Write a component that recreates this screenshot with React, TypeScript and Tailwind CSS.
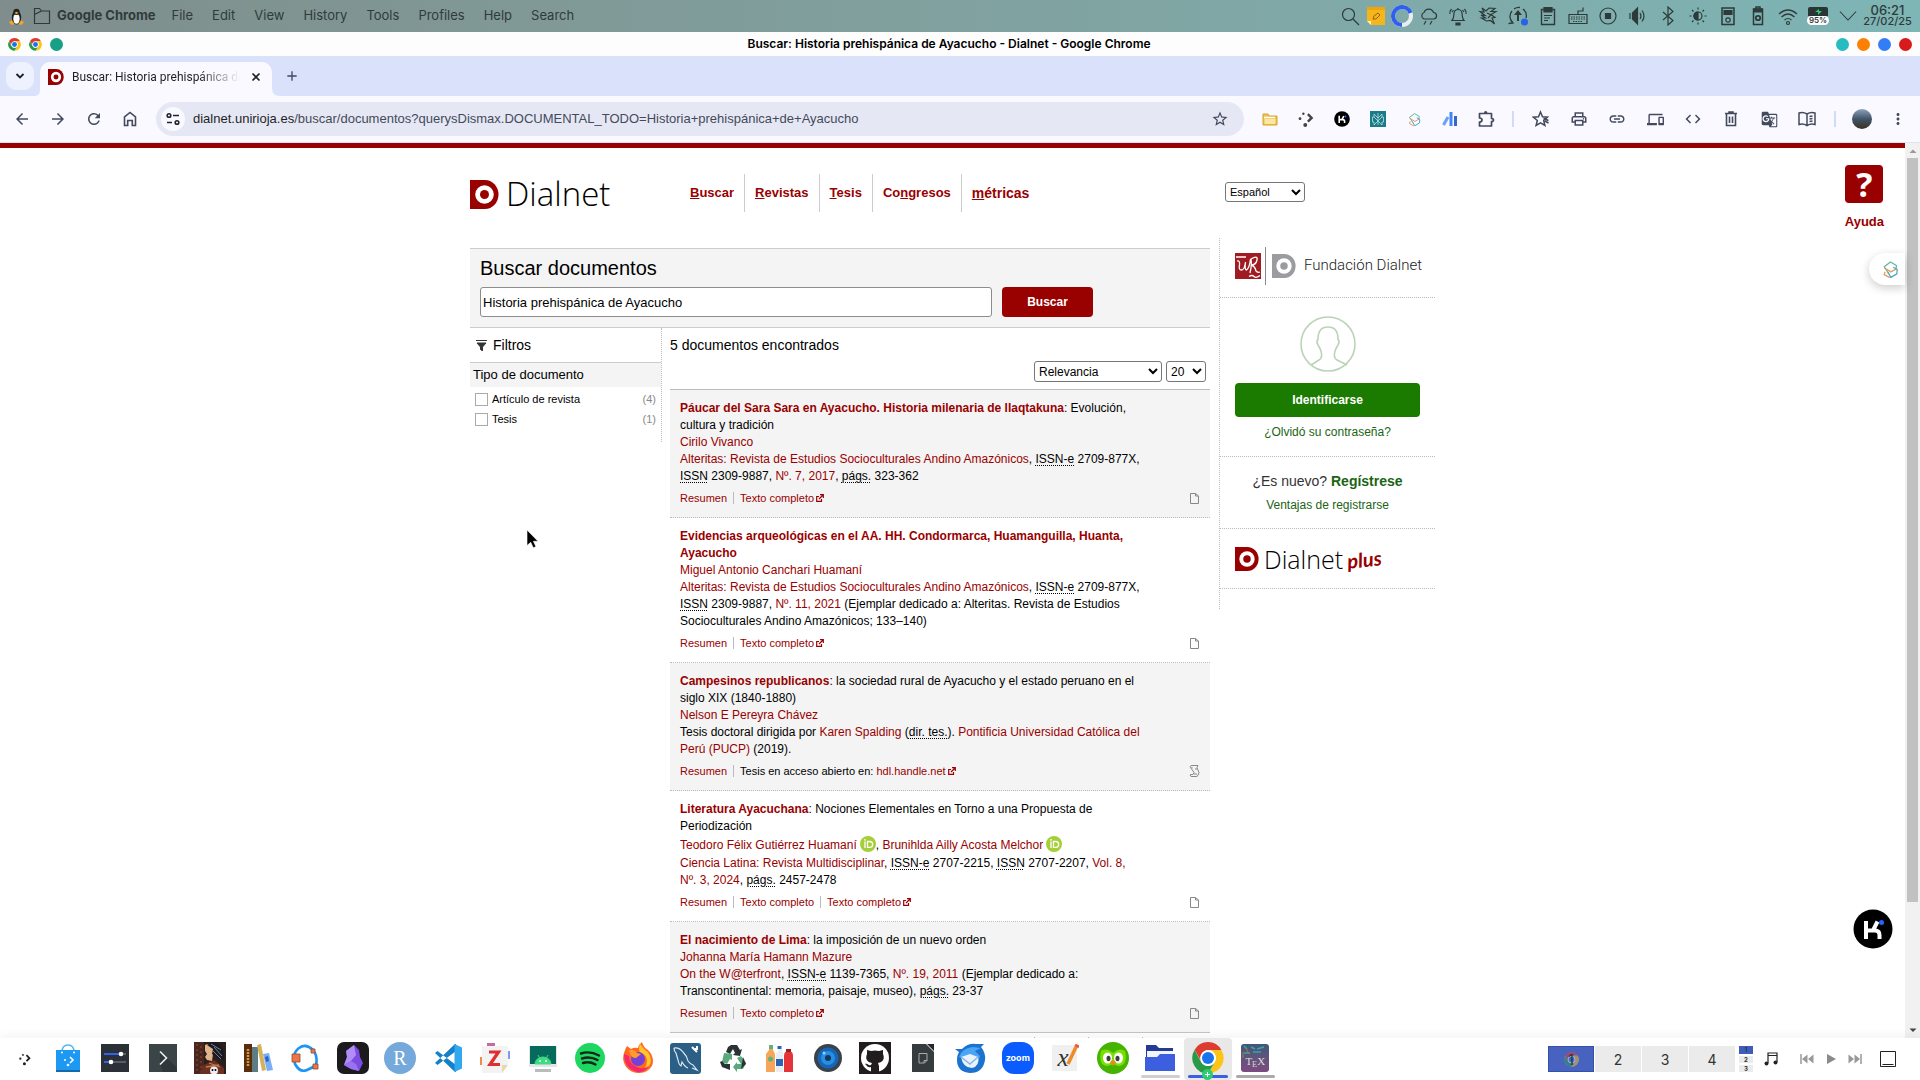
import React from "react";
import type { ReactNode } from "react";
import {
  MdArrowBack, MdArrowForward, MdRefresh, MdStarBorder, MdOutlinePrint, MdLink,
  MdOutlineDevices, MdCode, MdGTranslate, MdMoreVert, MdAdd,
} from "react-icons/md";

const P = ({ s = 24, vb = 24, children, className = "" }: { s?: number; vb?: number; children: ReactNode; className?: string }) => (
  <svg width={s} height={s} viewBox={`0 0 ${vb} ${vb}`} fill="none" className={`shrink-0 ${className}`} aria-hidden="true">
    {children}
  </svg>
);

const DMark = ({ s, color = "#990000" }: { s: number; color?: string }) => (
  <P s={s} vb={29}>
    <path d="M0 0h15a13.500 14.500 0 0 1 0 29H0z" fill={color} />
    <circle cx="14.500" cy="14.500" r="9.300" fill="#fff" />
    <circle cx="14.500" cy="14.500" r="4.500" fill={color} />
  </P>
);

const Chrome = ({ s }: { s: number }) => (
  <P s={s} vb={48}>
    <circle cx="24" cy="24" r="23" fill="#fff" />
    <path d="M24 12h20a23 23 0 0 0-40-.500L14 29.500A12 12 0 0 1 24 12z" fill="#dd3b2f" />
    <path d="M34.400 30L24.500 47A23 23 0 0 0 44 12H24a12 12 0 0 1 10.400 18z" fill="#fcc419" />
    <path d="M13.600 30L4 11.800A23 23 0 0 0 24.300 47l10.100-17a12 12 0 0 1-20.800 0z" fill="#2a9a48" />
    <circle cx="24" cy="24" r="11.500" fill="#fff" />
    <circle cx="24" cy="24" r="9" fill="#1a73e8" />
  </P>
);

const Sider = ({ s }: { s: number }) => (
  <P s={s}>
    <g strokeWidth="1.600" strokeLinejoin="round" strokeLinecap="round">
      <path d="M9 16L4 8.500 12 2.500l7.500 4.500-.5 4" stroke="#5cb8a5" />
      <path d="M19 11.500l-6.500 3.500L4.500 10M5 15.500l-1 3 6.500 3.500" stroke="#e59a63" />
      <path d="M9 16l3.500 6 7.500-4.500.500-5.500-4.500-2.500" stroke="#4aa8c4" />
    </g>
  </P>
);

const KMark = ({ s }: { s: number }) => (
  <P s={s} vb={40}>
    <circle cx="20" cy="20" r="19.500" fill="#000" />
    <path d="M13 12v18M13 21.500h9.500M24.500 12.500l-4.500 9M22 21.500q4.500 0 4.500 4.500v4" stroke="#fff" strokeWidth="4" />
    <circle cx="28.500" cy="13.500" r="2.500" fill="#2563ff" />
  </P>
);

const KdeDots = ({ s, color = "#222" }: { s: number; color?: string }) => (
  <P s={s}>
    <circle cx="8.500" cy="5" r="1.600" fill={color} />
    <circle cx="4" cy="11.500" r="1.900" fill={color} />
    <circle cx="11" cy="20" r="2.600" fill={color} />
    <path d="M14.500 5.500l5 5-5 5" stroke={color} strokeWidth="3.200" />
  </P>
);

/* ---------- desktop menu bar ---------- */

const ink = "#2d3a3a";
const Line = ({ children, s = 20 }: { children: ReactNode; s?: number }) => (
  <P s={s} vb={20}>
    <g stroke={ink} strokeWidth="1.200">{children}</g>
  </P>
);

const tray: [string, ReactNode][] = [
  ["Notificaciones", <Line key="b"><path d="M4 14.500h12c-2-2-1.500-4-2-7a4 4 0 0 0-8 0c-.5 3 0 5-2 7zM10 3.500V2M3.500 3q-2 2-1.500 5M16.500 3q2 2 1.500 5M5.500 4l-1.500 2M14.500 4l1.500 2" /><path d="M8 17h4v2H8z" fill={ink} /></Line>],
  ["Pájaro", <Line key="c"><path d="M4 2l4 3 3-3 6 .5-4 3h5l-5 3 4 3-3 .5 2.500 6-4-3.500-4 .5-5-3h4L3 9l4 .5L2 5.500l4 .5zM9 7l4 2-3 3" /></Line>],
  ["Actualizaciones", <P key="d" s={22} vb={22}><path d="M6 18a8.500 8.500 0 0 1-1-12M16 4a8.500 8.500 0 0 1 3 9M3 13.500L6 18l-4.500.500M7 4a8.500 8.500 0 0 1 6-1.500" stroke={ink} strokeWidth="1.300" /><path d="M10 16V10H7l4-5 4 5h-3v6z" fill={ink} /><circle cx="17.500" cy="17" r="3.500" fill="#2563eb" /></P>],
  ["Portapapeles", <Line key="e"><path d="M3.500 3.500h13v15h-13z" strokeWidth="1.400" /><path d="M6 1.500h8V6H6z" fill={ink} /><path d="M6 9.500h8M6 12h6M6 14.500h4" /></Line>],
  ["Teclado", <Line key="f"><path d="M1 8.500h18v9H1zM10 8V5h5V1.500" /><path d="M3 11h14M3 13h14M5 15.500h10" strokeDasharray="1.500 1" /></Line>],
  ["Grabar", <Line key="g"><circle cx="10" cy="10" r="8" /><path d="M7.500 7.500h5v5h-5z" fill={ink} /></Line>],
  ["Volumen", <Line key="h"><path d="M2 7v6M4.500 7v6l5 5V2l-5 5z" fill={ink} /><path d="M12 7q2 3 0 6M14 4.500q4 5.500 0 11" /></Line>],
  ["Bluetooth", <Line key="i"><path d="M5 6l10 8.500-5 4.500V1l5 4.500L5 14" /></Line>],
  ["Brillo", <Line key="j"><circle cx="10" cy="10" r="4" /><path d="M10 6a4 4 0 0 0 0 8z" fill={ink} /><path d="M10 1.500v2M10 16.500v2M1.500 10h2M16.500 10h2M4 4l1.500 1.500M14.500 14.500L16 16M4 16l1.500-1.500M14.500 5.500L16 4" /></Line>],
  ["Discos", <Line key="k"><path d="M4 2h12v16.500H4z" strokeWidth="1.500" /><path d="M6 4.500h8v4H6z" fill={ink} /><circle cx="10" cy="14" r="2.200" /></Line>],
  ["Energía", <Line key="l"><path d="M5.500 3h9v15.500h-9zM8 1h4v2H8z" strokeWidth="1.500" /><path d="M6 3h8v3H6z" fill={ink} /><circle cx="10" cy="12" r="2.200" strokeWidth="1.800" /></Line>],
  ["Wifi", <Line key="m"><path d="M1 8q9-8 18 0M3.500 11q6.500-6 13 0M6.500 14q3.500-3 7 0" /><circle cx="10" cy="17" r="1.500" /></Line>],
];

function MenuBar() {
  return (
    <header className="flex h-8 shrink-0 items-center bg-linear-to-r from-[#7f8e8c] via-[#80a19f] to-[#7eb5b5] pr-2 pl-2 font-[Inter] text-[#2f3b3b]">
      <P s={17} vb={18}>
        <ellipse cx="9" cy="10" rx="5" ry="7.500" fill="#222" />
        <ellipse cx="9" cy="11.500" rx="3.400" ry="5.300" fill="#fff" />
        <circle cx="9" cy="4" r="3.300" fill="#222" />
        <path d="M7 5l2-1 2 1-2 1.500z" fill="#f5a623" />
        <path d="M1 15l3-2 3 4-3 1zM17 15l-3-2-3 4 3 1z" fill="#f5a623" />
      </P>
      <P s={18} vb={18} className="ml-2">
        <path d="M1.500 1.500h5l2 2.500h8v12.500h-15zM1.500 7.500l3-1.500 4-2" stroke={ink} strokeWidth="1.200" />
      </P>
      <span className="ml-1.5 text-[13px] font-bold">Google Chrome</span>
      <nav className="ml-4 flex gap-[19px] text-[13px]">
        {["File", "Edit", "View", "History", "Tools", "Profiles", "Help", "Search"].map((m) => (
          <button key={m} type="button">{m}</button>
        ))}
      </nav>
      <div className="ml-auto flex items-center">
        <span className="flex w-[26px] justify-center"><Line><circle cx="8.500" cy="8.500" r="6" /><path d="M13 13l6 6" /></Line></span>
        <span className="flex w-[26px] justify-center">
          <P s={18} vb={18}><path d="M0 0h18v18H4l-4-4z" fill="#f7b51c" /><path d="M0 0h18v3H0z" fill="#f0a50c" /><path d="M0 14h4v4z" fill="#fff3c4" /><path d="M6 12l1-3 4-3 2 2-4 4z" stroke="#94640a" /></P>
        </span>
        <span className="flex w-[26px] justify-center">
          <P s={22} vb={22}><circle cx="11" cy="11" r="9" stroke="#e8eeee" strokeWidth="4" /><path d="M11 20A9 9 0 1 1 19.500 8" stroke="#2f5ff0" strokeWidth="4" /></P>
        </span>
        <span className="flex w-[28px] justify-center">
          <Line><path d="M5 13a3.500 3.500 0 0 1 0-6.500 5 5 0 0 1 9.500 0 3.300 3.300 0 0 1 .5 6.500zM7 15l-2 3.500M13 15l-2 3.500" /></Line>
        </span>
        {tray.map(([label, icon]) => (
          <button key={label} type="button" aria-label={label} className="flex w-[30px] justify-center">{icon}</button>
        ))}
        <span className="flex w-[30px] flex-col items-center">
          <span className="flex h-[9px] w-5 items-center justify-center rounded-t-xs bg-[#2b3535]">
            <P s={9} vb={9}><path d="M1 5l4-3v2h3L4 8V5z" fill="#2ecc71" /></P>
          </span>
          <span className="rounded-full bg-white px-0.5 text-[8px] leading-[9px] font-semibold">95%</span>
        </span>
        <span className="flex w-[30px] justify-center"><Line s={18}><path d="M1 5l9 9.500L19 5" /></Line></span>
        <time className="flex w-[49px] flex-col items-center text-[11px] leading-[11px] font-medium">
          <span className="text-[13px]">06:21</span>
          <span>27/02/25</span>
        </time>
      </div>
    </header>
  );
}

/* ---------- browser chrome ---------- */

function Browser() {
  const ext = "flex w-9 justify-center";
  const tool = "flex w-[38px] justify-center";
  return (
    <>
      <div className="grid h-6 shrink-0 grid-cols-[1fr_auto_1fr] items-center bg-[#fdfdfd] px-2">
        <div className="flex items-center gap-2">
          <Chrome s={13} />
          <Chrome s={13} />
          <span className="size-[13px] rounded-full bg-[#17a085]" />
        </div>
        <h1 className="mr-[22px] font-[Inter] text-[12px] font-semibold text-black">Buscar: Historia prehispánica de Ayacucho - Dialnet - Google Chrome</h1>
        <div className="flex items-center justify-end gap-2">
          <button type="button" aria-label="Atenuar" className="size-[13px] rounded-full bg-[#26bcc0]" />
          <button type="button" aria-label="Minimizar" className="size-[13px] rounded-full bg-[#fb8004]" />
          <button type="button" aria-label="Maximizar" className="size-[13px] rounded-full bg-[#347ef5]" />
          <button type="button" aria-label="Cerrar" className="size-[13px] rounded-full bg-[#d91a1a]" />
        </div>
      </div>
      <div className="flex h-10 shrink-0 items-end bg-[#dae1fa] pl-1.5 font-[Roboto] text-[#1f2026]">
        <button type="button" aria-label="Buscar pestañas" className="mb-1.5 flex size-7 items-center justify-center rounded-[10px] bg-[#eef1fe]">
          <P s={10} vb={10}><path d="M1.500 3L5 6.500 8.500 3" stroke="#1f2026" strokeWidth="1.800" /></P>
        </button>
        <P s={6} vb={6}><path d="M6 0v6H0q6 0 6-6z" fill="#f9f9ff" /></P>
        <div className="flex h-[34px] w-[232px] items-center rounded-t-[10px] bg-[#f9f9ff] pr-[11px] pb-1 pl-2">
          <DMark s={16} />
          <span className="ml-2 w-[168px] overflow-hidden bg-linear-to-r from-[#1f2026] from-75% to-transparent bg-clip-text text-[12px] whitespace-nowrap text-transparent">Buscar: Historia prehispánica de Ayacucho</span>
          <button type="button" aria-label="Cerrar pestaña" className="ml-auto"><P s={10} vb={10}><path d="M1.500 1.500l7 7M8.500 1.500l-7 7" stroke="#1f2026" strokeWidth="1.700" /></P></button>
        </div>
        <P s={8} vb={8}><path d="M0 0v8h8q-8 0-8-8z" fill="#f9f9ff" /></P>
        <button type="button" aria-label="Pestaña nueva" className="mb-3 ml-1 text-[#444a5c]"><MdAdd size={16} /></button>
      </div>
      <div className="flex h-[47px] shrink-0 items-center border-b border-[#dfe3f5] bg-[#f9f9ff] pr-1 text-[#434a5e]">
        <button type="button" aria-label="Atrás" className="ml-1 flex w-9 justify-center"><MdArrowBack size={18} /></button>
        <button type="button" aria-label="Adelante" className="flex w-9 justify-center"><MdArrowForward size={18} /></button>
        <button type="button" aria-label="Recargar" className="flex w-9 justify-center"><MdRefresh size={18} /></button>
        <button type="button" aria-label="Inicio" className="flex w-9 justify-center">
          <P s={18} vb={18}><path d="M3.500 15.500V7L9 2.500 14.500 7v8.500h-3.200v-5H6.700v5z" stroke="#434a5e" strokeWidth="1.600" /></P>
        </button>
        <div className="ml-2 flex h-[34px] flex-1 items-center rounded-full bg-[#e5e8f4] px-[5px]">
          <span className="flex size-6 items-center justify-center rounded-full bg-[#f9f9ff]">
            <P s={14} vb={14}><g stroke="#1f2430" strokeWidth="1.600"><circle cx="3" cy="3.500" r="1.800" /><path d="M7 3.500h6M1 10.500h5" /><circle cx="11" cy="10.500" r="1.800" /></g></P>
          </span>
          <span className="ml-2 flex-1 font-[Liberation_Sans] text-[13px] whitespace-nowrap text-[#444a5a]"><span className="text-[#1d1f27]">dialnet.unirioja.es</span>/buscar/documentos?querysDismax.DOCUMENTAL_TODO=Historia+prehispánica+de+Ayacucho</span>
          <button type="button" aria-label="Añadir a marcadores" className="mr-2.5"><MdStarBorder size={18} /></button>
        </div>
        <div className="ml-2 flex items-center">
          <span className={ext}><P s={16} vb={16}><path d="M1 3h5l1 2h8v9H1z" fill="#f0c24b" stroke="#d8a42c" /><path d="M2.500 8h11v5h-11z" fill="#fbe6a2" /><path d="M2 6.500h11" stroke="#fff" strokeWidth="1.500" /></P></span>
          <span className={ext}><KdeDots s={18} color="#444" /></span>
          <span className={ext}><KMark s={16} /></span>
          <span className={ext}><P s={16} vb={16}><path d="M0 0h16v16H0z" fill="#1b7b87" /><path d="M8 2v12M4 3l4 4 4-4v3h1.500v5H12v3l-4-4-4 4v-3H2.500V6H4zM4 6l4 4 4-4" stroke="#b6dfe2" strokeWidth=".8" /></P></span>
          <span className={ext}><Sider s={15} /></span>
          <span className={ext}><P s={16} vb={16}><path d="M1.500 14L6 6" stroke="#6da0f5" strokeWidth="3" /><path d="M9 1v14" stroke="#4285f4" strokeWidth="3" /><path d="M13.500 5v10" stroke="#3367c9" strokeWidth="3" /></P></span>
          <span className={ext}><P s={18} vb={18}><path d="M2.500 3.500h12v5q2 0 2 1.500t-2 1.500v4.500h-12v-4q2.500 0 2.500-2t-2.500-2z" stroke="#434a5e" strokeWidth="1.700" strokeLinejoin="round" /><path d="M7 3q0-2 1.700-2t1.700 2z" fill="#434a5e" /></P></span>
        </div>
        <span className="mx-2 h-4 w-0.5 bg-[#cfdcf8]" />
        <div className="flex items-center">
          <span className={tool}><P s={18} vb={18}><path d="M8.500 2l2 4.800 5 .4-3.800 3.300 1.200 5-4.400-2.700-4.400 2.700 1.200-5L1.500 7.200l5-.4zM13 11l3.500 2M11.500 8.500l5 2" stroke="#434a5e" strokeWidth="1.500" /></P></span>
          <span className={tool}><MdOutlinePrint size={18} /></span>
          <span className={tool}><MdLink size={18} /></span>
          <span className={tool}><MdOutlineDevices size={17} /></span>
          <span className={tool}><MdCode size={18} /></span>
          <span className={tool}><P s={18} vb={18}><path d="M3 3.500h12M7 3V2h4v1M4.500 4v11.500h9V4M7.500 6.500v6.500M10.500 6.500v6.500" stroke="#434a5e" strokeWidth="1.600" /></P></span>
          <span className={tool}><MdGTranslate size={17} /></span>
          <span className={tool}><P s={20} vb={20}><path d="M10 5q-4-2.500-8-1v11.500q4-1.500 8 1 4-2.500 8-1V4q-4-1.500-8 1zM10 5v11.500M12.500 7.500l3-.5M12.500 10l3-.5M12.500 12.500l3-.5" stroke="#434a5e" strokeWidth="1.500" /></P></span>
        </div>
        <span className="mx-2 h-4 w-0.5 bg-[#cfdcf8]" />
        <span className="flex size-9 items-center justify-center">
          <span className="size-5 rounded-full bg-linear-to-b from-[#8fa3b8] via-[#41546a] to-[#3b3020]" />
        </span>
        <button type="button" aria-label="Menú" className={ext}><MdMoreVert size={18} /></button>
      </div>
    </>
  );
}

/* ---------- Dialnet page ---------- */

const A = ({ children, b = false }: { children: ReactNode; b?: boolean }) => (
  <a href="#" className={b ? "font-bold text-[#990000]" : "text-[#990000]"}>{children}</a>
);
const Ab = ({ children }: { children: ReactNode }) => (
  <abbr className="underline decoration-dotted decoration-1 underline-offset-2">{children}</abbr>
);
const Ext = () => (
  <P s={8} vb={8} className="ml-0.5 inline-block"><path d="M3 2.500H.700v4.800h4.800V5M4 .700h3.300V4M7 1L3 5" stroke="#990000" strokeWidth="1.200" /></P>
);
const Orcid = () => (
  <P s={16} vb={16} className="mb-1 ml-[3px] inline-block align-middle">
    <circle cx="8" cy="8" r="8" fill="#a6ce39" />
    <path d="M5 5.500V12M7.500 5.500h2.200a2.800 2.800 0 0 1 0 5.900H7.500z" stroke="#fff" strokeWidth="1.300" />
    <circle cx="5" cy="3.800" r=".9" fill="#fff" />
  </P>
);

type Item = { body: ReactNode; links: ReactNode[]; thesis?: boolean };

const completo = <><A>Texto completo</A><Ext /></>;
const alteritas = <A>Alteritas: Revista de Estudios Socioculturales Andino Amazónicos</A>;

const items: Item[] = [
  {
    body: (
      <>
        <p><A b>Páucar del Sara Sara en Ayacucho. Historia milenaria de llaqtakuna</A>: Evolución, cultura y tradición</p>
        <p><A>Cirilo Vivanco</A></p>
        <p>{alteritas}, <Ab>ISSN-e</Ab> 2709-877X, <Ab>ISSN</Ab> 2309-9887, <A>Nº. 7, 2017</A>, <Ab>págs.</Ab> 323-362</p>
      </>
    ),
    links: [<A key="r">Resumen</A>, completo],
  },
  {
    body: (
      <>
        <p><A b>Evidencias arqueológicas en el AA. HH. Condormarca, Huamanguilla, Huanta, Ayacucho</A></p>
        <p><A>Miguel Antonio Canchari Huamaní</A></p>
        <p>{alteritas}, <Ab>ISSN-e</Ab> 2709-877X, <Ab>ISSN</Ab> 2309-9887, <A>Nº. 11, 2021</A> (Ejemplar dedicado a: Alteritas. Revista de Estudios Socioculturales Andino Amazónicos; 133–140)</p>
      </>
    ),
    links: [<A key="r">Resumen</A>, completo],
  },
  {
    body: (
      <>
        <p><A b>Campesinos republicanos</A>: la sociedad rural de Ayacucho y el estado peruano en el siglo XIX (1840-1880)</p>
        <p><A>Nelson E Pereyra Chávez</A></p>
        <p>Tesis doctoral dirigida por <A>Karen Spalding</A> (<Ab>dir. tes.</Ab>). <A>Pontificia Universidad Católica del Perú (PUCP)</A> (2019).</p>
      </>
    ),
    links: [<A key="r">Resumen</A>, <>Tesis en acceso abierto en: <A>hdl.handle.net</A><Ext /></>],
    thesis: true,
  },
  {
    body: (
      <>
        <p><A b>Literatura Ayacuchana</A>: Nociones Elementales en Torno a una Propuesta de Periodización</p>
        <p className="h-5 leading-5"><A>Teodoro Félix Gutiérrez Huamaní</A><Orcid />, <A>Brunihlda Ailly Acosta Melchor</A><Orcid /></p>
        <p><A>Ciencia Latina: Revista Multidisciplinar</A>, <Ab>ISSN-e</Ab> 2707-2215, <Ab>ISSN</Ab> 2707-2207, <A>Vol. 8, Nº. 3, 2024</A>, <Ab>págs.</Ab> 2457-2478</p>
      </>
    ),
    links: [<A key="r">Resumen</A>, <A key="t">Texto completo</A>, completo],
  },
  {
    body: (
      <>
        <p><A b>El nacimiento de Lima</A>: la imposición de un nuevo orden</p>
        <p><A>Johanna María Hamann Mazure</A></p>
        <p><A>On the W@terfront</A>, <Ab>ISSN-e</Ab> 1139-7365, <A>Nº. 19, 2011</A> (Ejemplar dedicado a: Transcontinental: memoria, paisaje, museo), <Ab>págs.</Ab> 23-37</p>
      </>
    ),
    links: [<A key="r">Resumen</A>, completo],
  },
];

function ResultItem({ item }: { item: Item }) {
  return (
    <li className="border-b border-dotted border-[#bbb] px-2.5 pt-2.5 pb-[11px] odd:bg-[#f4f4f4] last:border-solid last:border-[#c4c4c4]">
      <div className="w-[462px] text-[12px] leading-[17px]">{item.body}</div>
      <div className="mt-[5px] flex h-4 items-center text-[11px] leading-4">
        {item.links.map((l, i) => (
          <span key={i} className={i === 0 ? "" : "ml-1.5 flex h-3 items-center border-l border-[#bbb] pl-1.5 whitespace-pre"}>{l}</span>
        ))}
        <P s={12} vb={12} className="ml-auto">
          {item.thesis
            ? <path d="M3 3.500q-2-3 1-3h6q-2 2 0 4.500t0 5.500q-1 1-2 1H3q-2-2 0-2h2q2-2 0-3.500T4 2M7 4h2M6 9h3" stroke="#888" />
            : <path d="M2.500 1.500h5L10.500 4v7.500h-8zM7.500 1.500V4h3" stroke="#888" />}
        </P>
      </div>
    </li>
  );
}

function DialnetPage() {
  const dotted = "border-b border-dotted border-[#bbb]";
  return (
    <div className="relative flex min-h-0 flex-1 overflow-hidden bg-white font-[Liberation_Sans] text-black">
      <div className="flex-1 border-t-[5px] border-[#990000]">
        <div className="mx-auto w-[965px]">
          <div className="flex h-[90px] items-start pt-[26px]">
            <a href="#" aria-label="Dialnet" className="flex h-10 w-[210px] items-center gap-[7px]">
              <DMark s={29} />
              <span className="font-[Open_Sans] text-[33px] leading-10 font-light">Dialnet</span>
            </a>
            <nav className="flex h-[38px] items-center text-[13px] font-bold text-[#990000]">
              <a href="#" className="flex h-full items-center border-r border-[#ccc] px-2.5"><span><u>B</u>uscar</span></a>
              <a href="#" className="flex h-full items-center border-r border-[#ccc] px-2.5"><span><u>R</u>evistas</span></a>
              <a href="#" className="flex h-full items-center border-r border-[#ccc] px-2.5"><span><u>T</u>esis</span></a>
              <a href="#" className="flex h-full items-center border-r border-[#ccc] px-2.5"><span>Co<u>n</u>gresos</span></a>
              <a href="#" className="px-2.5 text-[14px]"><u>m</u>étricas</a>
            </nav>
            <select aria-label="Idioma" className="mt-2 mr-[130px] ml-auto h-5 w-20 rounded-[3px] border border-[#767676] bg-white text-[11px]"><option>Español</option></select>
          </div>

          <div className="flex items-start justify-between">
            <div className="mt-2.5 w-[740px]">
              <form className="border-y border-[#ccc] bg-[#f4f4f4] px-2.5 pt-[7px] pb-2.5">
                <label htmlFor="q" className="mb-[7px] block text-[20px] leading-6">Buscar documentos</label>
                <div className="flex gap-2.5">
                  <input id="q" type="text" defaultValue="Historia prehispánica de Ayacucho" className="h-[30px] w-[512px] rounded-[3px] border border-[#8c8c8c] bg-white px-0.5 text-[13px]" />
                  <button type="button" className="h-[30px] w-[91px] rounded bg-[#990000] text-[12px] font-bold text-white">Buscar</button>
                </div>
              </form>
              <div className="flex items-start">
                <aside className="w-[192px] shrink-0 border-r border-dotted border-[#bbb] pb-[13px]">
                  <h2 className="flex h-[34px] items-center gap-1.5 pl-1.5 text-[14px]">
                    <P s={11} vb={11}><path d="M0 .500h11M1 3h9L6.500 7v4L4.500 9.500V7z" stroke="#333" fill="#333" /></P>
                    Filtros
                  </h2>
                  <h3 className="mb-0.5 h-[25px] border-t border-[#ccc] bg-[#f4f4f4] pl-[3px] text-[13px] leading-6">Tipo de documento</h3>
                  {[["Artículo de revista", "(4)"], ["Tesis", "(1)"]].map(([t, n]) => (
                    <label key={t} className="flex h-5 items-center pr-[5px] pl-[5px] text-[11px]">
                      <input type="checkbox" className="mr-1 size-[13px] appearance-none border border-[#aaa] bg-white" />
                      {t}
                      <span className="ml-auto text-[11px] text-[#888]">{n}</span>
                    </label>
                  ))}
                </aside>
                <main className="ml-2 flex-1">
                  <h2 className="h-[33px] text-[14px] leading-[34px]">5 documentos encontrados</h2>
                  <div className="mb-[7px] flex justify-end gap-1 pr-1 text-[12px]">
                    <select aria-label="Orden" className="h-[21px] w-32 rounded-[3px] border border-[#767676] bg-white"><option>Relevancia</option></select>
                    <select aria-label="Resultados por página" className="h-[21px] w-10 rounded-[3px] border border-[#767676] bg-white"><option>20</option></select>
                  </div>
                  <ul className="border-t border-[#bbb]">
                    {items.map((it, i) => <ResultItem key={i} item={it} />)}
                  </ul>
                  <nav aria-label="Páginas" className="mt-1 mr-3 flex h-6 justify-end">
                    <span className="w-[54px] border-l border-[#bbb]" />
                    <span className="w-[54px] border-l border-[#bbb]" />
                    <span className="w-[56px] border-l border-[#bbb]" />
                  </nav>
                </main>
              </div>
            </div>

            <aside className="w-[216px] border-l border-dotted border-[#bbb] pb-5 text-center text-[#1b6414]">
              <div className={`flex h-[60px] items-center pt-2 pb-3 pl-[15px] ${dotted}`}>
                <P s={26} vb={26}><path d="M0 0h26v26H0z" fill="#a01c22" /><path d="M2 8q3-1 2.500 4-1 5 2 5t4-8q-1 8 1 8 3-2 4-11M1 4h10M15 20q2-8 1-14 7-4 6 1t-6 5q4 1 5 6 2 2 4 1M14 23.500q3-2 5 0t6-1" stroke="#fff" strokeWidth="1.300" /></P>
                <span className="mx-1.5 ml-1 h-[38px] w-px bg-[#888]" />
                <DMark s={24} color="#9b9c9f" />
                <span className="ml-2 font-[Roboto] text-[15px] font-light text-[#222]">Fundación Dialnet</span>
              </div>
              <div className={`flex h-[159px] flex-col items-center pt-[18px] ${dotted}`}>
                <P s={56} vb={56}><g stroke="#bcd3b8" strokeWidth="1.600"><circle cx="28" cy="28" r="27" /><path d="M11 49l8-5q4-2 2-9-1-3-3-6-2-3 0-6 0-12 10-12t10 12q2 3 0 6-2 3-3 6-2 7 2 9l10 5" /></g></P>
                <button type="button" className="mt-[11px] h-[34px] w-[185px] rounded bg-[#1b7a00] text-[12px] font-bold text-white">Identificarse</button>
                <a href="#" className="mt-[7px] text-[12px] leading-4">¿Olvidó su contraseña?</a>
              </div>
              <div className={`flex h-[72px] flex-col items-center pt-3.5 ${dotted}`}>
                <p className="text-[14px] leading-5 text-[#333]">¿Es nuevo? <a href="#" className="font-bold text-[#1b6414]">Regístrese</a></p>
                <a href="#" className="mt-1.5 text-[12px] leading-4">Ventajas de registrarse</a>
              </div>
              <div className={`flex h-[60px] items-center pl-[15px] ${dotted}`}>
                <DMark s={24} />
                <span className="ml-[5px] font-[Open_Sans] text-[25px] leading-8 font-light text-black">Dialnet</span>
                <span className="ml-1 -rotate-6 font-[Lato] text-[20px] leading-8 font-bold text-[#990000] italic">plus</span>
              </div>
            </aside>
          </div>
        </div>
      </div>

      <a href="#" className="absolute top-[22px] right-9 flex flex-col items-center gap-[9px] text-[13px] font-bold text-[#990000]">
        <span className="flex size-[38px] items-center justify-center rounded bg-[#990000] font-[Open_Sans] text-[34px] leading-9 text-white">?</span>
        Ayuda
      </a>
      <div className="absolute top-[110px] right-[15px] flex h-8 w-9 items-center rounded-l-full bg-white pl-3 shadow-[0_3px_10px_rgba(0,0,0,0.2)]"><Sider s={19} /></div>
      <div className="absolute right-[27px] bottom-[89px]"><KMark s={40} /></div>

      <div className="flex w-[15px] shrink-0 flex-col items-center justify-between bg-[#f1f1f1]">
        <P s={15} vb={15}><path d="M4.500 10h7L8 6.500z" fill="#999" /></P>
        <span className="mb-[121px] w-[11px] flex-1 bg-[#c1c1c1]" />
        <P s={15} vb={15}><path d="M4.500 5.500h7L8 9z" fill="#444" /></P>
      </div>

      <P s={20} vb={20} className="absolute top-[386px] left-[525px]"><path d="M2 1v15.500l3.700-3.200 2.600 5.500 2.600-1.200-2.500-5.300h4.600z" fill="#000" stroke="#fff" strokeWidth=".6" /></P>
    </div>
  );
}

/* ---------- dock ---------- */

const apps: [string, ReactNode][] = [
  ["Discover", <P key="1" s={28} vb={28}><path d="M8 8Q8 1 14 1t6 7" stroke="#5bb8ea" strokeWidth="1.500" /><path d="M2 6h24v21H2z" fill="#1d99f3" /><path d="M2 26h24v2H2z" fill="#1668a8" /><circle cx="8" cy="8.500" r="1" fill="#fff" /><circle cx="20" cy="8.500" r="1" fill="#fff" /><circle cx="11" cy="16" r="1" fill="#fff" /><circle cx="14" cy="21" r="1.300" fill="#fff" /><path d="M16 13l3 3-3 3" stroke="#fff" strokeWidth="1.600" /></P>],
  ["Ajustes", <P key="2" s={28} vb={28}><path d="M0 0h28v28H0z" fill="#2b3036" /><path d="M3 10h22M3 18h22" stroke="#565d66" strokeWidth="2" /><path d="M3 10h16M3 18h6" stroke="#2f62f0" strokeWidth="2" /><circle cx="20" cy="10" r="2.300" fill="#fff" /><circle cx="10" cy="18" r="2.300" fill="#fff" /></P>],
  ["Konsole", <P key="3" s={28} vb={28}><path d="M0 0h28v28H0z" fill="#3b4547" /><path d="M11 7l7 7 10 10v4H14L11 20z" fill="#2e3739" /><path d="M11 7.500l6.500 6.500-6.500 6.500" stroke="#eee" strokeWidth="1.600" /></P>],
  ["Retrato", <P key="4" s={32} vb={32}><path d="M0 0h32v32H0z" fill="#2b1f1b" /><path d="M0 0h10v32H0z" fill="#4b261e" /><path d="M3 2v28M7 4v26" stroke="#8e4a34" strokeDasharray="2 3" /><path d="M11 3q6-3 9 2l-1 7-1 7-5-1-2-3 2-3-2-3z" fill="#e2b48c" /><path d="M13 3q6-5 12-1 6 4 5 16l-5-1-7-5 1-5z" fill="#181a22" /><path d="M20 5l8 9M17 2l10 6M19 9l8 8" stroke="#7a8090" /><path d="M8 24l12-6 10 8v6H6z" fill="#6b3022" /><path d="M12 25l13-2M15 21l11 4" stroke="#c8794f" strokeWidth="1.300" /><circle cx="20" cy="28.500" r="4" fill="#eee" /><circle cx="18.500" cy="28" r="1" fill="#000" /><circle cx="21.500" cy="28" r="1" fill="#000" /></P>],
  ["Calibre", <P key="5" s={30} vb={30}><path d="M1 1h8v28H1z" fill="#5a2d0c" /><path d="M5 6v18" stroke="#d39b45" strokeWidth="2.500" strokeDasharray="2 1" /><path d="M9 4h6v25H9z" fill="#5c7d83" /><path d="M14 2l4-1 5 26-4 1z" fill="#d5b15c" /><path d="M20 11l6-1 4 17-6 1z" fill="#78aef5" /><path d="M22 14l3-1 1 5-3 1z" fill="#2a5fd0" /></P>],
  ["Karbon", <P key="6" s={28} vb={28}><path d="M22 6Q15-1 8 4T4 20q5 9 12 6t9-5M22 6q5 6 3 15" stroke="#1c95f5" strokeWidth="2.600" /><path d="M1 10h8v8H1zM20 5h4v4h-4zM22 20h5v5h-5z" fill="#f07546" stroke="#8c4930" strokeWidth=".8" /></P>],
  ["Obsidian", <P key="7" s={32} vb={32}><rect width="32" height="32" rx="7" fill="#1b1b1e" /><path d="M17 3l5 5 1 7 3 6-4 8-8-2-7-4 3-8-1-6z" fill="#7c4be0" /><path d="M17 3l2 10-5 6-7 4 3-8-1-6z" fill="#b08ef5" /><path d="M14 19l5 3 3 7-8-2-7-4z" fill="#9a72f0" /></P>],
  ["RStudio", <P key="8" s={32} vb={32}><circle cx="16" cy="16" r="16" fill="#75a8db" /><text x="16" y="22.500" textAnchor="middle" fontFamily="Liberation Serif" fontSize="20" fill="#fff">R</text></P>],
  ["Visual Studio Code", <P key="9" s={28} vb={28}><path d="M1 9l2.500-2L22 21v7l-1.500-.5zM1 19l2.500 2L22 7V0l-1.500.5z" fill="#1380c8" /><path d="M20.500 0L28 3.500v21L20.500 28z" fill="#32a8ee" /></P>],
  ["Zotero", <P key="10" s={30} vb={30}><path d="M7 0h8v4H7z" fill="#c76ba0" /><path d="M0 14h5v8H0z" fill="#f08a4b" /><path d="M25 8h5v8h-5z" fill="#7f9bf0" /><path d="M2 3h26v19l-6 8H2z" fill="#f3f3f3" /><path d="M28 22h-6v8z" fill="#e8d9a8" /><path d="M9 9h9.500L10 21.500h10" stroke="#e02f30" strokeWidth="3.200" /></P>],
  ["Android", <P key="11" s={28} vb={28}><path d="M0 2h28v21H0z" fill="#e3e5e6" /><path d="M1 2h26v18H1z" fill="#066a5c" /><path d="M6 20a8 7 0 0 1 16 0zM9 11l2 4M19 11l-2 4" fill="#3ddc84" stroke="#3ddc84" /><circle cx="11" cy="17" r="1" fill="#fff" /><circle cx="17" cy="17" r="1" fill="#fff" /><path d="M6 25h16v3H6z" fill="#b9bcbe" /></P>],
  ["Spotify", <P key="12" s={30} vb={30}><circle cx="15" cy="15" r="15" fill="#1ed760" /><path d="M6 10.500q9-3 18 2M7 15.500q8-2.500 15.500 1.500M8 20q6.500-2 12.500 1.500" stroke="#11271a" strokeWidth="2.400" strokeLinecap="round" /></P>],
  ["Firefox", <P key="13" s={32} vb={32}><path d="M16 31A15 15 0 0 1 2 11q1-4 3-7l4 3q3-2 7-1 1-4 4-6 1 5 6 8 5 5 5 11a14 12 0 0 1-15 12z" fill="#ff6a1f" /><path d="M18 2q3 5 8 8 5 8 1 14-4 6-11 6 9-3 9-11 0-6-7-9-2-3 0-8z" fill="#ffc72c" /><path d="M2 12q0 14 13 18 8 1 12-6-6 4-12 1-8-3-8-11z" fill="#f5286e" /><circle cx="16" cy="17" r="7" fill="#7540d8" /><path d="M7 8q5-1 8 3l4 1-5 4q-5 1-7-8z" fill="#ff9a2e" /></P>],
  ["MySQL Workbench", <P key="14" s={31} vb={31}><rect width="31" height="31" rx="3" fill="#2c5f86" /><path d="M4 5q5-1 9 4 4 4 5 9 2 3 5 4l4 5-5-2M4 5q0 3 2 5l2 7q1 5 3 6l1-4q3 5 6 6" stroke="#dbe7f0" strokeWidth="1.200" /><path d="M22 4l5 5M27 3v3h-2" stroke="#fff" strokeWidth="2" /></P>],
  ["Reciclar", <P key="15" s={28} vb={28}><path d="M9 3l3-2h6l3 5 2-1-2 7-7-1 2-2-2-4-3 5-4-2z" fill="#2b3236" /><path d="M5 9l8 1 0 6-2-1-3 5-5-2z" fill="#58a97b" /><path d="M1 18l2 5 8 3v-6H6l-3-3z" fill="#2b3236" /><path d="M22 12l5 7-3 6h-6v3l-4-5 4-5v2h4l-4-6z" fill="#58a97b" /><path d="M24 13l3 7-5 5z" fill="#2b3236" /></P>],
  ["Botellas", <P key="16" s={28} vb={28}><path d="M3 1h4v5l2 4v18H0V10l3-4z" fill="#f6a55b" /><path d="M3 1h4v4H3z" fill="#60b47a" /><circle cx="4.500" cy="15" r="2.500" fill="#60b47a" /><path d="M10 9q3-2 3-5l3 2 1 4v18h-7z" fill="#e9eef5" /><path d="M11.500 2h4v3h-4zM10 15h7v7h-7z" fill="#2d63b5" /><path d="M18 12q0-5 4.500-5T27 12v16h-9z" fill="#e43339" /><path d="M20 5h5v3h-5z" fill="#962127" /></P>],
  ["Cámara", <P key="17" s={28} vb={28}><circle cx="14" cy="14" r="14" fill="#3a434c" /><circle cx="14" cy="14" r="10.500" fill="#1565b8" /><circle cx="14" cy="14" r="7" fill="#278fe0" /><circle cx="14" cy="14" r="3" fill="#16365c" /><circle cx="10" cy="9" r="1.500" fill="#8fd0ff" /></P>],
  ["GitHub", <P key="18" s={32} vb={32}><path d="M0 0h32v32H0z" fill="#211d1f" /><circle cx="16" cy="16" r="14" fill="#fff" /><path d="M12 30v-5c-4 1-4-2-6-3 3-1 3 2 6 1l1-2c-5-1-7-4-5-9V8l4 1q4-1 8 0l4-1v4c2 5 0 8-5 9l1 3v6q-4 1-8 0z" fill="#211d1f" /></P>],
  ["Documento", <P key="19" s={28} vb={28}><path d="M3 0h14l8 8v20H3z" fill="#363b3e" /><path d="M18 0h7v7z" fill="#25292b" /><path d="M10 9.500h8v7L15.500 19H10zM18 16.500h-3V19" stroke="#aaa" strokeWidth="1" /></P>],
  ["Thunderbird", <P key="20" s={32} vb={32}><path d="M16 31Q3 30 3 18q0-5 2-8L1 7l7 0Q14 1 22 2h8l-3 3q5 6 4 13-2 13-15 13z" fill="#1b72cf" /><path d="M5 15q3-9 14-10l8 1-6 3 5 5-2 6z" fill="#4aa5f3" /><path d="M7 15l9-3 8 3q2 9-6 11-9 0-11-11z" fill="#eaf3fc" /><path d="M7 15l9 7 8-7" stroke="#86b9e6" strokeWidth="1.500" /></P>],
  ["Zoom", <span key="21" className="flex size-8 items-center justify-center rounded-[12px] bg-[#0b5cff] font-[Inter] text-[9px] font-bold text-white">zoom</span>],
  ["Xournal", <P key="22" s={28} vb={28}><path d="M1 1h25v26H1z" fill="#f0f0f0" /><text x="12" y="22" textAnchor="middle" fontFamily="Liberation Serif" fontStyle="italic" fontSize="25" fill="#333">x</text><path d="M25 3l-8 17" stroke="#f08a24" strokeWidth="3.500" /><path d="M24 1l4 2" stroke="#e75b45" strokeWidth="3" /></P>],
  ["Duolingo", <P key="23" s={32} vb={32}><circle cx="16" cy="16" r="16" fill="#46b300" /><path d="M4 9q6-4 12 2 6-6 12-2 3 15-7 15l-5-2-5 2Q1 24 4 9z" fill="#7ae000" /><ellipse cx="10.500" cy="16" rx="4.500" ry="5.500" fill="#fff" /><ellipse cx="21.500" cy="16" rx="4.500" ry="5.500" fill="#fff" /><ellipse cx="11.500" cy="16.500" rx="2" ry="2.800" fill="#3c3c3c" /><ellipse cx="20.500" cy="16.500" rx="2" ry="2.800" fill="#3c3c3c" /><path d="M13 20q3-3 6 0l-3 4z" fill="#f6821a" /></P>],
  ["Archivos", <P key="24" s={30} vb={30}><path d="M1 2h10l3 3h14v22H1z" fill="#243a97" /><path d="M2 8h26v9H2z" fill="#f0f4fc" /><path d="M0 14h12l3-3h15v17H0z" fill="#3c5fe0" /></P>],
  ["Google Chrome", <Chrome key="25" s={32} />],
  [
    "TeX",
    <span key="26" className="relative flex size-7 items-end justify-center overflow-hidden rounded-[3px] bg-linear-to-b from-[#3b5a78] to-[#7d4a80] pb-1">
      <P s={28} vb={28} className="absolute inset-0"><path d="M3 2l3 3M10 3l4 2M16 5l7-2M3 9h6M12 8h8" stroke="#3fa0ae" strokeWidth="1.500" /><path d="M2 8v6M5 4l3 6" stroke="#a8763d" /></P>
      <span className="relative font-[Liberation_Serif] text-[11px] leading-[14px] whitespace-nowrap text-[#ddd]">T<sub>E</sub>X</span>
    </span>,
  ],
];

const underline: Record<string, string> = {
  Archivos: "bg-[#cfcfcf]",
  "Google Chrome": "bg-[#3a5fe5]",
  TeX: "bg-[#a9a9a9]",
};

function Dock() {
  return (
    <footer className="relative flex h-[42px] shrink-0 items-center bg-white font-[Inter] text-[#333] shadow-[0_-2px_10px_rgba(0,0,0,0.05)]">
      <button type="button" aria-label="Lanzador" className="flex w-11 justify-center pl-1.5"><KdeDots s={14} /></button>
      <div className="grid h-full w-[1235px] grid-cols-[repeat(26,minmax(0,1fr))]">
        {apps.map(([name, icon]) => (
          <button key={name} type="button" aria-label={name} className={`relative flex h-full items-center justify-center pb-0.5 ${name === "Google Chrome" ? "rounded bg-[#e8e8e8]" : ""}`}>
            {icon}
            {underline[name] && <span className={`absolute inset-x-1 bottom-0.5 h-[3px] rounded-full ${underline[name]}`} />}
            {name === "Google Chrome" && (
              <P s={11} vb={11} className="absolute bottom-0"><circle cx="5.500" cy="5.500" r="5.500" fill="#2ecc71" /><path d="M5.500 3v5M3 5.500h5" stroke="#fff" /></P>
            )}
          </button>
        ))}
      </div>
      <div className="ml-auto flex items-center pr-6">
        <div className="flex gap-px text-[14px]">
          <button type="button" className="relative flex h-[26px] w-[46px] items-center justify-center border border-[#3350ab] bg-[#4762bf]">
            <span className="absolute opacity-50"><Chrome s={15} /></span>
            <span className="relative">1</span>
          </button>
          {["2", "3", "4"].map((n) => <button key={n} type="button" className="h-[26px] w-[46px] bg-[#ebebeb]">{n}</button>)}
        </div>
        <div className="ml-1 flex w-3.5 flex-col gap-0.5 text-center text-[6px] leading-[7px] font-bold">
          <span className="bg-[#3f5cbd] leading-[8px]">1</span>
          <span className="bg-[#ebebeb]">2</span>
          <span className="bg-[#ebebeb]">3</span>
        </div>
        <P s={14} vb={14} className="ml-[11px]"><path d="M4 11V1h9v9M4 3.500h9" stroke="#222" strokeWidth="1.200" /><circle cx="2.500" cy="11.500" r="2" fill="#222" /><circle cx="11.500" cy="10.500" r="2" fill="#222" /></P>
        <button type="button" aria-label="Anterior" className="ml-[22px]">
          <P s={14} vb={14}><path d="M1 2v10" stroke="#999" strokeWidth="1.500" /><path d="M7.500 2.500v9L2 7zM13.500 2.500v9L8 7z" fill="#999" /></P>
        </button>
        <button type="button" aria-label="Reproducir" className="ml-2.5"><P s={14} vb={14}><path d="M3 2l9 5-9 5z" fill="#8a8a8a" /></P></button>
        <button type="button" aria-label="Siguiente" className="ml-2.5">
          <P s={14} vb={14}><path d="M13 2v10" stroke="#999" strokeWidth="1.500" /><path d="M6.500 2.500v9L12 7zM.5 2.500v9L6 7z" fill="#999" /></P>
        </button>
        <button type="button" aria-label="Mostrar escritorio" className="ml-[18px]"><P s={16} vb={16}><path d="M.5.500h15v15H.500zM2.500 13.500h11" stroke="#222" /></P></button>
      </div>
    </footer>
  );
}

export default function App() {
  return (
    <div className="flex h-screen flex-col overflow-hidden bg-white">
      <MenuBar />
      <Browser />
      <DialnetPage />
      <Dock />
    </div>
  );
}
